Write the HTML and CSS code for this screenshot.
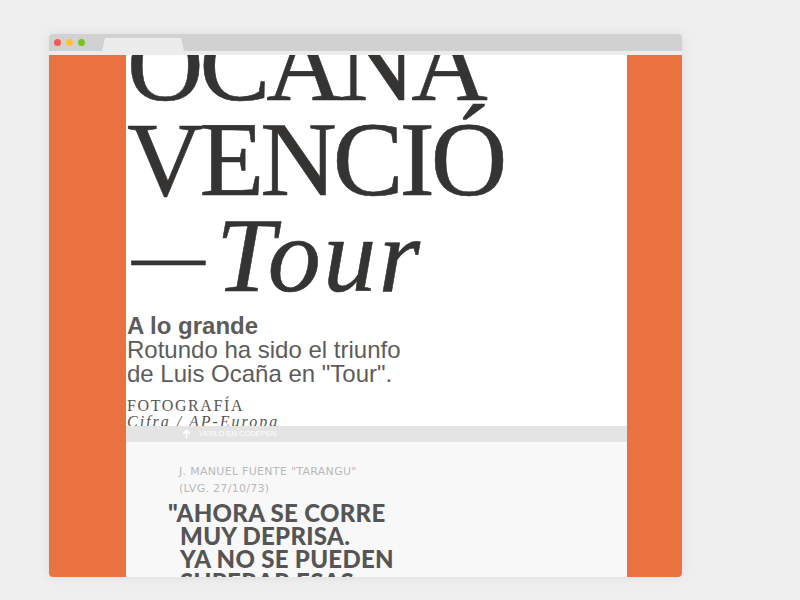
FILE: index.html
```html
<!DOCTYPE html>
<html>
<head>
<meta charset="utf-8">
<link rel="stylesheet" href="styles.css">
</head>
<body>
<div class="window">
  <div class="titlebar">
    <span class="dot red"></span><span class="dot yellow"></span><span class="dot green"></span>
    <div class="tab"></div>
  </div>
  <div class="content">
    <div class="side left"></div>
    <div class="main">
      <div class="hero">
        <h1 class="headline">OCAÑA<br>VENCIÓ<br><em><span class="dash">—</span>Tour</em></h1>
        <p class="lead"><strong>A lo grande</strong><br>Rotundo ha sido el triunfo<br>de Luis Ocaña en "Tour".</p>
        <p class="credit"><span class="credit-label">FOTOGRAFÍA</span><br><em>Cifra / AP-Europa</em></p>
      </div>
      <div class="bar"><svg class="arrow" width="9" height="10" viewBox="0 0 9 10"><path d="M4.5 9.5V1.5M1 5L4.5 1.5L8 5" fill="none" stroke="#fff" stroke-width="1.6"/></svg>VERLO EN CODEPEN</div>
      <div class="quote-section">
        <p class="byline">J. MANUEL FUENTE "TARANGU"<br>(LVG. 27/10/73)</p>
        <blockquote class="quote">"AHORA SE CORRE<br>MUY DEPRISA.<br>YA NO SE PUEDEN<br>SUPERAR ESAS</blockquote>
      </div>
    </div>
    <div class="side right"></div>
  </div>
</div>
</body>
</html>
```
FILE: styles.css
```css
html, body { margin: 0; padding: 0; }
body { background: #efefef; width: 800px; height: 600px; overflow: hidden; }
.window {
  margin: 34px 0 0 49px;
  width: 633px;
  height: 543px;
  border-radius: 4px;
  overflow: hidden;
  box-shadow: 0 0 12px rgba(0,0,0,0.08);
  display: flex;
  flex-direction: column;
  background: #fff;
}
.titlebar {
  height: 17px;
  background: #d1d1d1;
  border-bottom: 4px solid #ececec;
  display: flex;
  align-items: center;
  position: relative;
  padding-left: 5px;
  flex-shrink: 0;
}
.dot { width: 7px; height: 7px; border-radius: 50%; margin-right: 5px; margin-top: -1px; }
.red { background: #f45b55; }
.yellow { background: #f9c23e; }
.green { background: #7cc224; }
.tab {
  position: absolute;
  left: 53px;
  bottom: 0;
  width: 82px;
  height: 13px;
  background: #ececec;
  clip-path: polygon(3px 0, 79px 0, 82px 100%, 0 100%);
}
.content { flex: 1; display: flex; overflow: hidden; }
.side { background: #ea7140; flex-shrink: 0; }
.left { width: 77px; }
.right { width: 55px; }
.main { width: 501px; flex-shrink: 0; display: flex; flex-direction: column; overflow: hidden; background: #f8f8f8; }
.hero { background: #fff; height: 371px; flex-shrink: 0; overflow: hidden; padding-left: 1px; }
.headline {
  margin: -38px 0 0 0;
  font-family: "Liberation Serif", serif;
  font-weight: 400;
  font-size: 106px;
  line-height: 95px;
  letter-spacing: -4px;
  color: #353433;
  white-space: nowrap;
  -webkit-text-stroke: 0.6px #353433;
}
.headline em { font-style: italic; letter-spacing: 2.5px; }
.dash { font-size: 82px; vertical-align: 9px; letter-spacing: 11px; margin-left: 5px; }
.lead {
  margin: 11px 0 0 0;
  font-family: "Liberation Sans", Arial, sans-serif;
  font-size: 24px;
  line-height: 24px;
  color: #5d5c5b;
}
.lead strong { font-weight: 700; }
.credit {
  margin: 12px 0 0 0;
  font-family: "Liberation Serif", serif;
  font-size: 16px;
  line-height: 16px;
  color: #555;
}
.credit-label { letter-spacing: 1.6px; }
.credit em { letter-spacing: 2px; }
.bar {
  height: 16px;
  flex-shrink: 0;
  background: #e4e4e4;
  color: #fff;
  font-family: "Liberation Sans", Arial, sans-serif;
  font-size: 7.5px;
  line-height: 16px;
  padding-left: 56px;
  display: flex;
  align-items: center;
}
.arrow { margin-right: 8px; margin-top: -1px; }
.quote-section { padding: 21px 0 0 42px; }
.byline {
  margin: 0 0 0 11px;
  font-family: "DejaVu Sans", sans-serif;
  font-size: 11px;
  line-height: 17px;
  color: #b9b9b9;
  letter-spacing: 0.3px;
}
.quote {
  margin: 4px 0 0 0;
  text-indent: -12px;
  padding-left: 12px;
  font-family: Lato, sans-serif;
  font-weight: 900;
  font-size: 24px;
  line-height: 23px;
  color: #555;
  letter-spacing: 0.3px;
}
```
